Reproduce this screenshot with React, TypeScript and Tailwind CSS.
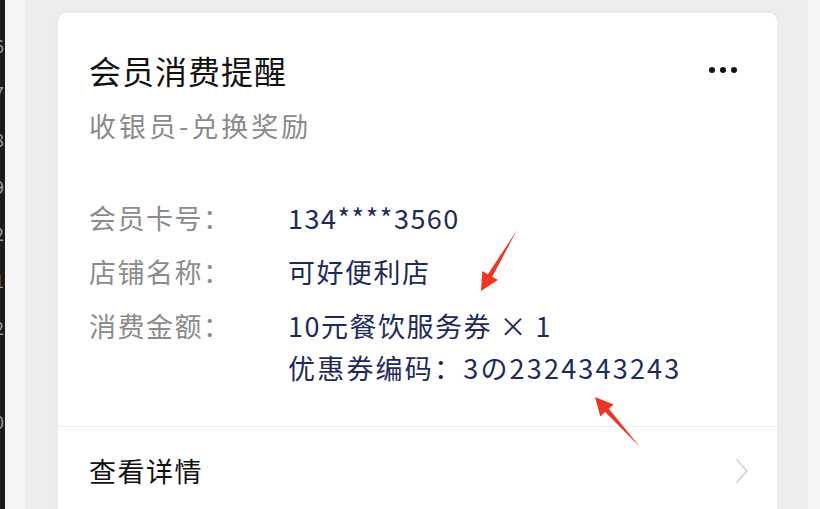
export default function App() {
  const rows = [
    { label: '会员卡号：', value: ['134****3560'] },
    { label: '店铺名称：', value: ['可好便利店'] },
    { label: '消费金额：', value: ['10元餐饮服务券 × 1', '优惠券编码：3の2324343243'] },
  ]
  const gutter = ['6', '7', '8', '9', '2', '1', '2', '', '0']

  return (
    <div
      className="relative flex h-[509px] w-[820px] overflow-hidden"
      style={{ fontFamily: '"Noto Sans CJK SC", "Noto Sans", sans-serif' }}
    >
      {/* editor gutter peeking in on the left */}
      <div className="w-[5px] shrink-0 overflow-hidden bg-[#1b1b1b] pt-[22px]">
        {gutter.map((n, i) => (
          <div key={i} className="-ml-[6px] h-[47px] text-[18px] leading-[47px] text-[#9c9c9c]">
            {n}
          </div>
        ))}
      </div>
      <div className="w-[20px] shrink-0 bg-[#f5f5f5]" />
      <div className="w-[33px] shrink-0 bg-[#ededed]" />

      {/* card */}
      <div className="flex flex-1 flex-col bg-[#ededed] pt-[13px]">
        <div className="flex flex-1 flex-col rounded-t-lg bg-white shadow-[0_0_4px_rgba(0,0,0,0.04)]">
          <div className="px-[31px] pt-[35px]">
            <div className="flex items-center justify-between">
              <h1 className="text-[32px] leading-[44px] tracking-[1px] text-[#111]">会员消费提醒</h1>
              <div className="mr-[9px] flex items-center gap-[5px]">
                <span className="h-[6px] w-[6px] rounded-full bg-[#111]" />
                <span className="h-[6px] w-[6px] rounded-full bg-[#111]" />
                <span className="h-[6px] w-[6px] rounded-full bg-[#111]" />
              </div>
            </div>
            <p className="mt-[12px] text-[27px] leading-[44px] tracking-[3px] text-[#8a8a8a]">收银员-兑换奖励</p>

            <div className="mt-[49px] flex flex-col gap-[12px]">
              {rows.map((r) => (
                <div key={r.label} className="flex text-[27px] leading-[42px] tracking-[1.5px]">
                  <div className="w-[199px] shrink-0 text-[#8c8c8c]">{r.label}</div>
                  <div className="flex flex-col text-[#1e2b5a]">
                    {r.value.map((v, i) => (
                      <span key={v} className={i === 1 ? 'tracking-[2.2px]' : ''}>
                        {v}
                      </span>
                    ))}
                  </div>
                </div>
              ))}
            </div>
          </div>

          <div className="mt-[37px] h-px bg-[#ebebeb]" />

          <div className="flex h-[88px] items-center justify-between pl-[31px] pr-[27px]">
            <span className="text-[27px] tracking-[1.5px] text-[#111]">查看详情</span>
            <svg width="16" height="26" viewBox="0 0 16 26" fill="none">
              <path d="M3 2l10 11L3 24" stroke="#d4d4d4" strokeWidth="1.8" strokeLinecap="round" strokeLinejoin="round" />
            </svg>
          </div>
        </div>
      </div>

      <div className="w-[31px] shrink-0 bg-[#ededed]" />
      <div className="w-[12px] shrink-0 bg-[#f5f5f5]" />

      {/* red annotation arrows */}
      <svg className="pointer-events-none absolute left-0 top-0" width="820" height="509" viewBox="0 0 820 509">
        <polygon
          points="517,230 492.3,276.8 497.9,280.1 481,291 482.3,270.9 487.9,274.2"
          fill="#ee3524"
        />
        <polygon
          points="640,447 608.9,408.7 613.7,404.4 595,397 600.3,416.4 605.1,412.1"
          fill="#ee3524"
        />
      </svg>
    </div>
  )
}
